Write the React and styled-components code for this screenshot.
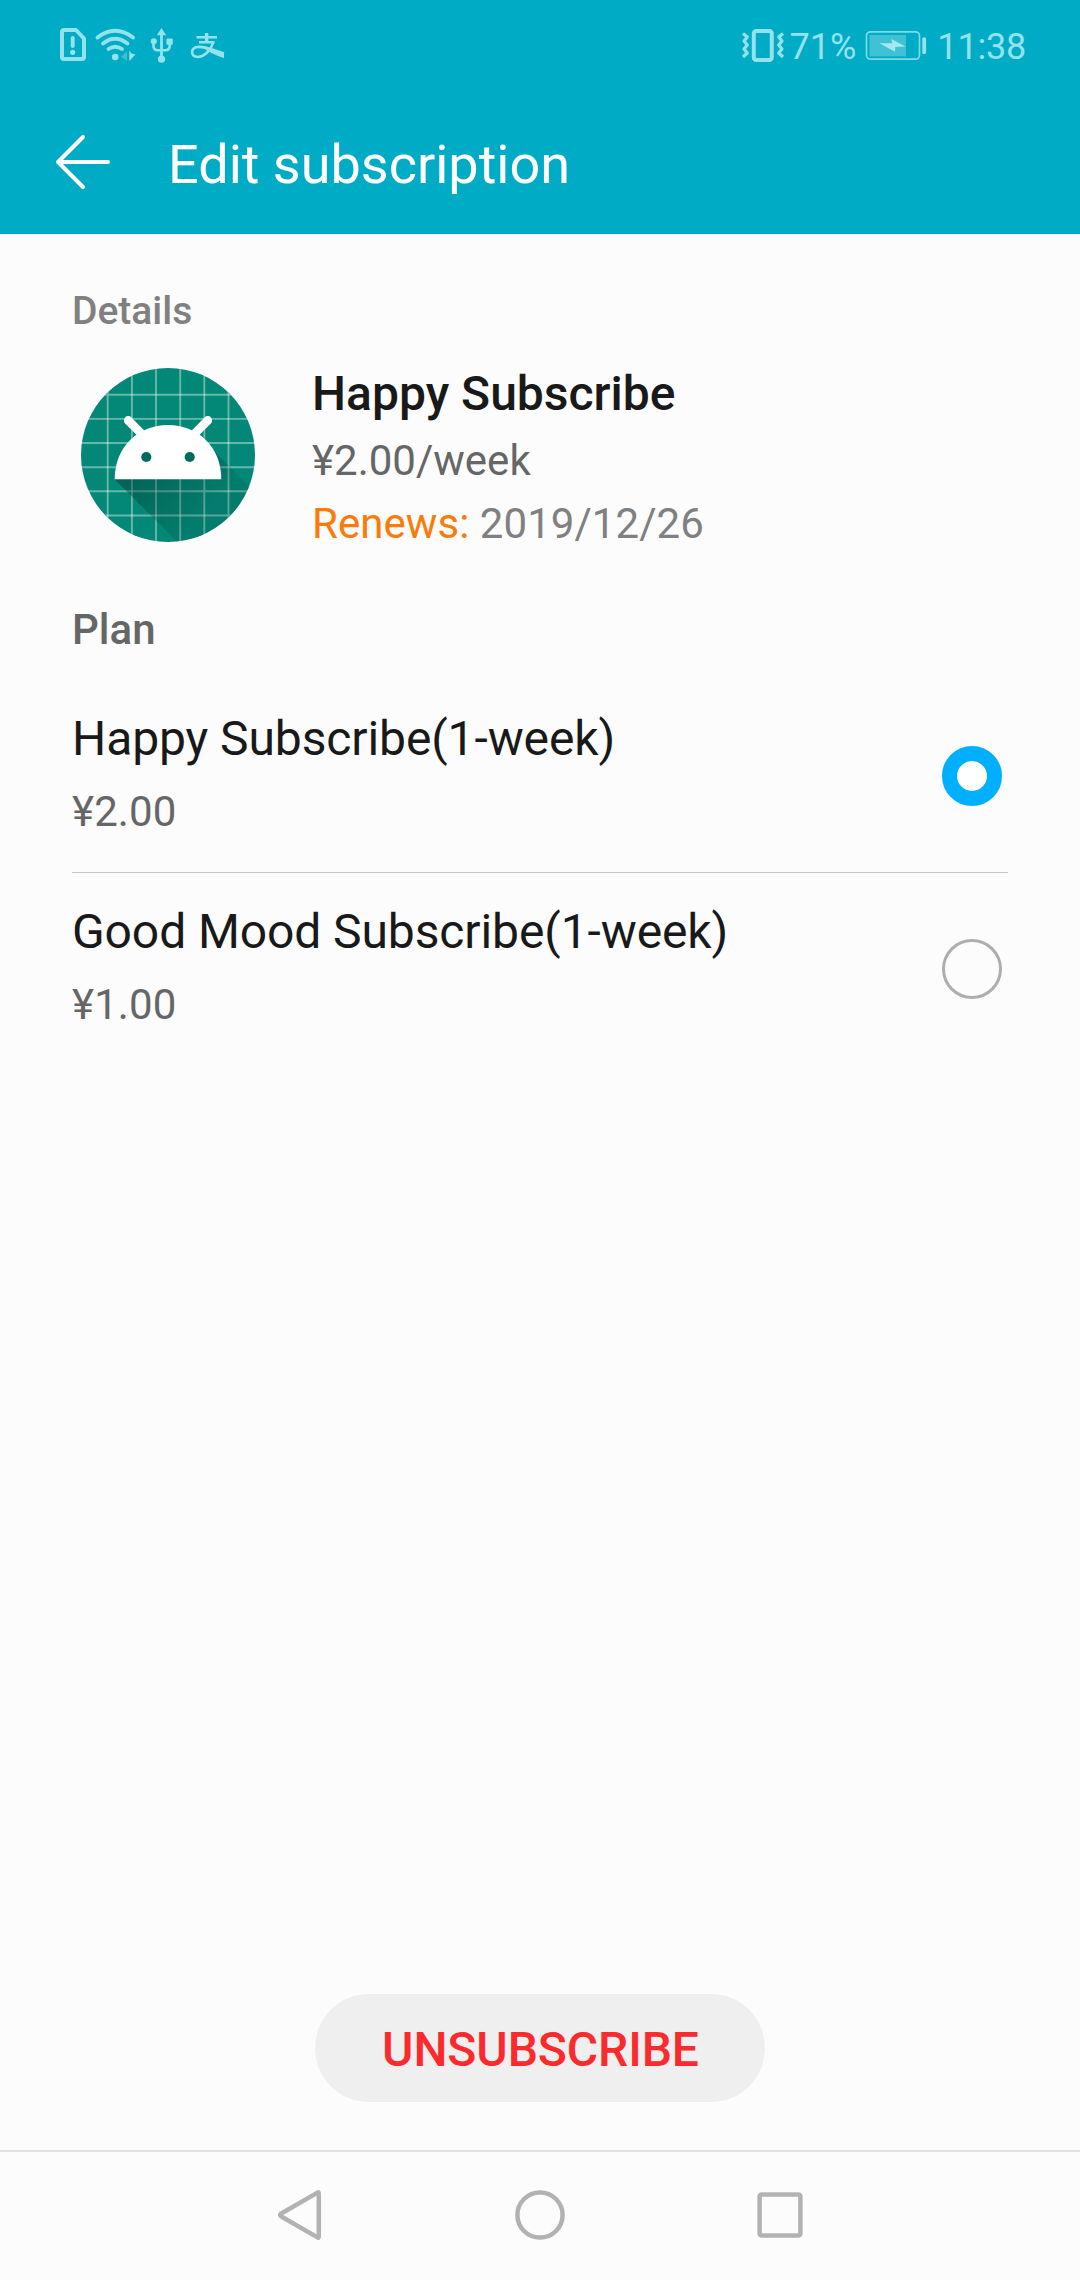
import React, { useState } from "react";
import styled, { createGlobalStyle } from "styled-components";

const GlobalStyle = createGlobalStyle`
  *, *::before, *::after { box-sizing: border-box; }
  body {
    margin: 0;
    background: #fcfcfc;
    font-family: Roboto, "Noto Sans", sans-serif;
  }
`;

const Screen = styled.div`
  width: 1080px;
  height: 2280px;
  display: flex;
  flex-direction: column;
  background: #fcfcfc;
`;

const Header = styled.header`
  height: 234px;
  background: #00acc5;
`;

const StatusBar = styled.div`
  height: 90px;
  padding: 0 54px 0 58px;
  display: flex;
  align-items: center;
  justify-content: space-between;
  color: #93e2ec;
`;

const StatusGroup = styled.div`
  display: flex;
  align-items: center;
  gap: ${(p) => p.$gap}px;
`;

const StatusIcon = styled.svg`
  display: block;
  flex: none;
  height: 40px;
  width: ${(p) => p.$width}px;
`;

const StatusText = styled.span`
  padding-top: 3px;
  font-size: 36px;
  line-height: 42px;
  letter-spacing: ${(p) => p.$tracking || 0}px;
  white-space: nowrap;
`;

const AppBar = styled.div`
  height: 144px;
  padding: 0 54px 0 53px;
  display: flex;
  align-items: center;
  gap: 55px;
`;

const BackButton = styled.button`
  width: 60px;
  height: 60px;
  padding: 0;
  border: 0;
  background: none;
  color: #fff;
  svg { display: block; }
`;

const Title = styled.h1`
  margin: 4px 0 0;
  font-size: 54px;
  line-height: 63px;
  font-weight: 400;
  color: #fff;
`;

const Content = styled.main`
  flex: 1;
  display: flex;
  flex-direction: column;
  padding: 54px 72px 48px;
`;

const DetailsLabel = styled.h2`
  margin: 0;
  font-size: 39px;
  line-height: 46px;
  font-weight: 500;
  color: #808080;
`;

const Product = styled.section`
  display: flex;
  gap: 57px;
  padding: 32px 0 0 9px;
`;

const Logo = styled.svg`
  display: block;
  margin-top: 2px;
  width: 174px;
  height: 174px;
`;

const ProductInfo = styled.div`
  display: flex;
  flex-direction: column;
`;

const ProductName = styled.div`
  font-size: 48px;
  line-height: 56px;
  font-weight: 500;
  color: #191919;
`;

const ProductLine = styled.div`
  margin-top: 14px;
  font-size: 42px;
  line-height: 49px;
  letter-spacing: ${(p) => (p.$muted ? "0.05px" : "0")};
  color: ${(p) => (p.$muted ? "#808080" : "#666")};
`;

const Accent = styled.span`
  color: #fa7a0a;
`;

const PlanLabel = styled.h2`
  margin: 57px 0 0;
  font-size: 42px;
  line-height: 49px;
  font-weight: 500;
  color: #666;
`;

const PlanList = styled.div`
  margin-top: 26px;
`;

const PlanRow = styled.div`
  height: 193px;
  padding-right: 6px;
  display: flex;
  align-items: center;
  justify-content: space-between;
  border-bottom: 1px solid ${(p) => (p.$last ? "transparent" : "#c6c6c6")};
`;

const PlanText = styled.div`
  margin-bottom: 5px;
  display: flex;
  flex-direction: column;
  gap: 20px;
`;

const PlanName = styled.div`
  font-size: 48px;
  line-height: 56px;
  letter-spacing: -0.1px;
  color: #191919;
`;

const PlanPrice = styled.div`
  font-size: 42px;
  line-height: 49px;
  letter-spacing: 0.1px;
  color: #666;
`;

const Radio = styled.button`
  width: 60px;
  height: 60px;
  padding: 0;
  border-radius: 50%;
  border: ${(p) => (p.$checked ? "15px solid #00b0ff" : "3px solid #aeaeae")};
  background: ${(p) => (p.$checked ? "#fff" : "transparent")};
  background-clip: padding-box;
`;

const Footer = styled.div`
  margin-top: auto;
  display: flex;
  justify-content: center;
`;

const UnsubscribeButton = styled.button`
  width: 450px;
  height: 108px;
  padding: 3px 0 0 1px;
  border: 0;
  border-radius: 54px;
  background: #efefef;
  color: #fa2a2d;
  font: 500 48px/56px Roboto, "Noto Sans", sans-serif;
  letter-spacing: -0.1px;
  text-transform: uppercase;
`;

const NavBar = styled.nav`
  height: 130px;
  padding-bottom: 2px;
  border-top: 2px solid #e1e1e1;
  display: flex;
  align-items: center;
  justify-content: center;
  gap: 180px;
  svg { display: block; }
`;

function SimIcon() {
  return (
    <StatusIcon $width={30} viewBox="58 25 30 40" fill="none" stroke="currentColor">
      <path d="M64 30H76L84 38.5V57a2 2 0 0 1-2 2H64a2 2 0 0 1-2-2V32a2 2 0 0 1 2-2Z" strokeWidth="4" strokeLinejoin="round" />
      <path d="M72.7 38V46" strokeWidth="4" strokeLinecap="round" />
      <circle cx="72.7" cy="52.3" r="2.6" fill="currentColor" stroke="none" />
    </StatusIcon>
  );
}

function WifiIcon() {
  return (
    <StatusIcon $width={44} viewBox="94 25 44 40" fill="none" stroke="currentColor" strokeLinecap="round">
      <path d="M97.5 37.5Q115 24 133 37.5" strokeWidth="3.8" />
      <path d="M103 43.5Q115 34 127.5 43.5" strokeWidth="3.8" />
      <path d="M108.5 49Q115 44.5 122 49" strokeWidth="3.8" />
      <circle cx="115.2" cy="57" r="3.3" fill="currentColor" stroke="none" />
      <path d="M127 51.5V61L121 56.8Z" fill="#39c0d3" stroke="none" />
      <path d="M129.3 53V61L135.5 54.5L132 53.8L129.3 50.8Z" fill="currentColor" stroke="none" />
    </StatusIcon>
  );
}

function UsbIcon() {
  return (
    <StatusIcon $width={27} viewBox="148 25 27 40" fill="none" stroke="currentColor">
      <path d="M161.5 33V58" strokeWidth="2.8" />
      <path d="M161.5 28L166.2 35.3H156.8Z" fill="currentColor" stroke="none" />
      <path d="M153.5 43V46Q153.5 50.3 158 50.3H165Q169.7 50.3 169.7 46V43" strokeWidth="2.6" />
      <circle cx="153.8" cy="41.3" r="3.1" fill="currentColor" stroke="none" />
      <rect x="166.4" y="38.4" width="6.4" height="6.4" rx="1.2" fill="currentColor" stroke="none" />
      <circle cx="161.5" cy="59.2" r="3.6" fill="currentColor" stroke="none" />
    </StatusIcon>
  );
}

function AlipayIcon() {
  return (
    <StatusIcon $width={37} viewBox="189 25 37 40" fill="none" stroke="currentColor">
      <path d="M196.5 37.2H217M199 42.2H214.5" strokeWidth="2.4" />
      <path d="M206.6 33V42" strokeWidth="3.4" />
      <path d="M213.4 42C211.5 48.5 205 57.2 197.4 57C191 56.3 190.3 49.5 195.8 47.3C202.5 45.2 212 50 224 53.5" strokeWidth="2.6" />
      <path d="M204.5 46.6C211 49.2 217 51.4 224 52.8V58C217.5 56 212 53.4 206 50Z" fill="currentColor" stroke="none" />
    </StatusIcon>
  );
}

function VibrateIcon() {
  return (
    <StatusIcon $width={44} viewBox="741 25 44 40" fill="none" stroke="currentColor" strokeLinejoin="round">
      <rect x="753.8" y="31" width="18" height="29" rx="2.5" strokeWidth="4" />
      <path d="M743 33.5L747.3 37L744 41L747.3 45L744 49L747.3 53L743 57" strokeWidth="3.2" />
      <path d="M783 33.5L778.7 37L782 41L778.7 45L782 49L778.7 53L783 57" strokeWidth="3.2" />
    </StatusIcon>
  );
}

function BatteryIcon() {
  return (
    <StatusIcon $width={64} viewBox="864 25 64 40" fill="none">
      <rect x="866.5" y="31.8" width="53" height="27.4" rx="4" stroke="#7adbe7" strokeWidth="1.7" />
      <rect x="869.5" y="35" width="36.5" height="21.3" fill="#40c2d4" />
      <path d="M879.5 43.3H892.3L891.3 39L905.5 46.6L895.3 47L895 51.8Z" fill="#a6e8f0" />
      <rect x="922.3" y="37.2" width="3.8" height="16.8" rx="1.5" fill="#93e2ec" />
    </StatusIcon>
  );
}

function BackIcon() {
  return (
    <svg width="60" height="60" viewBox="53 132 60 60" fill="none" stroke="currentColor" strokeWidth="4" strokeLinecap="round" strokeLinejoin="round">
      <path d="M83 137L58 162L83 187M58 162H108" />
    </svg>
  );
}

const GRID = [26.7, 50.9, 75, 99.2, 123.3, 147.5];

function AppLogo() {
  return (
    <Logo viewBox="0 0 174 174">
      <defs>
        <clipPath id="disc"><circle cx="87" cy="87" r="87" /></clipPath>
        <linearGradient id="shade" gradientUnits="userSpaceOnUse" x1="60" y1="85" x2="122" y2="147">
          <stop offset="0" stopColor="#00392f" stopOpacity="0.48" />
          <stop offset="1" stopColor="#00392f" stopOpacity="0.14" />
        </linearGradient>
      </defs>
      <g clipPath="url(#disc)">
        <rect width="174" height="174" fill="#038777" />
        <g stroke="#fff" strokeOpacity="0.4" strokeWidth="1.9">
          {GRID.map((v) => (
            <path key={v} d={`M${v} 0V174M0 ${v}H174`} />
          ))}
        </g>
        <path d="M33.7 111.3L107.7 185.3H200V150L128 78Z" fill="url(#shade)" />
      </g>
      <g stroke="#fff" strokeWidth="8.6" strokeLinecap="round">
        <path d="M47.2 52.4L61 66.2M126.8 52.4L113 66.2" />
      </g>
      <path d="M33.7 111.3C33.7 78 58 57 87 57S140.3 78 140.3 111.3Z" fill="#fff" />
      <circle cx="65.3" cy="89" r="5.1" fill="#036b5d" />
      <circle cx="108.7" cy="89" r="5.1" fill="#036b5d" />
    </Logo>
  );
}

const PLANS = [
  { name: "Happy Subscribe(1-week)", price: "¥2.00" },
  { name: "Good Mood Subscribe(1-week)", price: "¥1.00" },
];

export default function App() {
  const [selected, setSelected] = useState(0);
  return (
    <>
      <GlobalStyle />
      <Screen>
        <Header>
          <StatusBar>
            <StatusGroup $gap={10}>
              <StatusGroup $gap={6}><SimIcon /><WifiIcon /></StatusGroup>
              <StatusGroup $gap={14}><UsbIcon /><AlipayIcon /></StatusGroup>
            </StatusGroup>
            <StatusGroup $gap={8}>
              <StatusGroup $gap={5}><VibrateIcon /><StatusText>71%</StatusText></StatusGroup>
              <StatusGroup $gap={9}><BatteryIcon /><StatusText $tracking={-0.2}>11:38</StatusText></StatusGroup>
            </StatusGroup>
          </StatusBar>
          <AppBar>
            <BackButton aria-label="Back"><BackIcon /></BackButton>
            <Title>Edit subscription</Title>
          </AppBar>
        </Header>
        <Content>
          <DetailsLabel>Details</DetailsLabel>
          <Product>
            <AppLogo />
            <ProductInfo>
              <ProductName>Happy Subscribe</ProductName>
              <ProductLine>¥2.00/week</ProductLine>
              <ProductLine $muted><Accent>Renews:</Accent> 2019/12/26</ProductLine>
            </ProductInfo>
          </Product>
          <PlanLabel>Plan</PlanLabel>
          <PlanList>
            {PLANS.map((plan, i) => (
              <PlanRow key={plan.name} $last={i === PLANS.length - 1}>
                <PlanText>
                  <PlanName>{plan.name}</PlanName>
                  <PlanPrice>{plan.price}</PlanPrice>
                </PlanText>
                <Radio
                  role="radio"
                  aria-checked={selected === i}
                  aria-label={plan.name}
                  $checked={selected === i}
                  onClick={() => setSelected(i)}
                />
              </PlanRow>
            ))}
          </PlanList>
          <Footer>
            <UnsubscribeButton>Unsubscribe</UnsubscribeButton>
          </Footer>
        </Content>
        <NavBar>
          <svg width="60" height="60" viewBox="270 2185 60 60" fill="none" stroke="#b2b2b2" strokeWidth="4.5" strokeLinejoin="round">
            <path d="M317.5 2192.6Q318.8 2191.8 318.8 2193.5V2236.5Q318.8 2238.2 317.5 2237.4L281.3 2216.5Q279 2215 281.3 2213.5Z" />
          </svg>
          <svg width="60" height="60" viewBox="0 0 60 60" fill="none" stroke="#b2b2b2" strokeWidth="4.5">
            <circle cx="30" cy="30" r="22.6" />
          </svg>
          <svg width="60" height="60" viewBox="0 0 60 60" fill="none" stroke="#b2b2b2" strokeWidth="4.5">
            <rect x="9.6" y="9.6" width="40.8" height="40.8" rx="2" />
          </svg>
        </NavBar>
      </Screen>
    </>
  );
}
